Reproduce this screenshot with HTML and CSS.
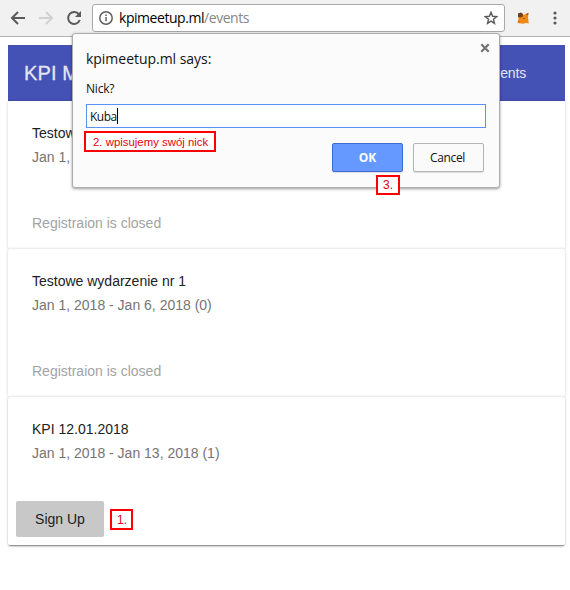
FILE: index.html
```html
<!DOCTYPE html>
<html lang="pl">
<head>
<meta charset="utf-8">
<title>KPI Meetup</title>
<link rel="stylesheet" href="styles.css">
</head>
<body>
<header class="toolbar">
  <svg class="nav back" viewBox="0 0 16 16"><path d="M15 8H2M8 2L2 8l6 6"/></svg>
  <svg class="nav forward" viewBox="0 0 16 16"><path d="M1 8h13M8 2l6 6-6 6"/></svg>
  <svg class="nav reload" viewBox="0 0 16 16"><path d="M13 4.4A6 6 0 1 0 13.8 10"/><path class="solid" d="M15 1v6H9z"/></svg>
  <div class="address">
    <svg class="info" viewBox="0 0 14 14"><circle cx="7" cy="7" r="6.2"/><path d="M7 6v4.3M7 3.4v1.5"/></svg>
    <span class="url">kpimeetup.ml<span class="path">/events</span></span>
    <svg class="star" viewBox="0 0 14 14"><path d="M7 1.3l1.6 4 4.1.3-3.2 2.7 1 4.1L7 10.2l-3.5 2.2 1-4.1-3.2-2.7 4.1-.3z"/></svg>
  </div>
  <svg class="fox" viewBox="0 0 12 12"><path fill="#ee8b16" d="M1 1l3 0 2.5 2L11.5.7l-.5 4.8.8 6L9 11l-3 .8-5.5-.8L1.5 7z"/><path fill="#71401f" d="M1 1.5l3-1L6 2 5.5 5 3 5.5 1 5z"/><path fill="#a9561a" d="M9 2.2L11.4.8 11 3.5zM6 6h2v1H6z"/><path fill="#d06d0c" d="M1.5 8l2 1.5L.8 11z"/></svg>
  <svg class="more" viewBox="0 0 4 14"><circle cx="2" cy="2" r="1.6"/><circle cx="2" cy="7" r="1.6"/><circle cx="2" cy="12" r="1.6"/></svg>
</header>
<main class="page">
  <nav class="appbar"><h1>KPI Meetup</h1><a>Events</a></nav>
  <section class="card">
    <h2>Testowe wydarzenie</h2>
    <p class="date">Jan 1, 2018 - Jan 6, 2018 (0)</p>
    <p class="closed">Registraion is closed</p>
  </section>
  <section class="card">
    <h2>Testowe wydarzenie nr 1</h2>
    <p class="date">Jan 1, 2018 - Jan 6, 2018 (0)</p>
    <p class="closed">Registraion is closed</p>
  </section>
  <section class="card">
    <h2>KPI 12.01.2018</h2>
    <p class="date">Jan 1, 2018 - Jan 13, 2018 (1)</p>
    <div class="actions"><button class="signup">Sign Up</button><span class="note note-signup">1.</span></div>
  </section>
</main>
<div class="dialog" role="dialog">
  <svg class="close" viewBox="0 0 10 10"><path d="M1.3 1.3l7.4 7.4M8.7 1.3L1.3 8.7"/></svg>
  <div class="title"><span>kpimeetup.ml says:</span></div>
  <div class="label"><span>Nick?</span></div>
  <div class="field"><span>Kuba</span><i class="caret"></i></div>
  <div class="buttons"><button class="ok">OK</button><button class="cancel"><span>Cancel</span></button></div>
  <span class="note note-nick">2. wpisujemy swój nick</span>
  <span class="note note-ok">3.</span>
</div>
</body>
</html>
```

FILE: styles.css
```css
* { box-sizing: border-box; }
body {
  margin: 0;
  width: 570px;
  height: 590px;
  overflow: hidden;
  background: #fff;
  font: 14px "Liberation Sans", sans-serif;
}
svg { display: block; flex: none; fill: none; }
h1, h2, p { margin: 0; font-weight: 400; }
button { padding: 0; font: inherit; }

.toolbar {
  display: flex;
  align-items: center;
  height: 37px;
  padding-left: 10px;
  background: #f1f1f1;
  border-bottom: 1px solid #b3b3b3;
}
.nav { width: 16px; height: 16px; stroke: #5a5a5a; stroke-width: 2; }
.forward { margin-left: 12px; stroke: #d0d0d0; }
.reload { margin-left: 12px; }
.solid { fill: #5a5a5a; stroke: none; }
.address {
  display: flex;
  align-items: center;
  width: 413px;
  height: 28px;
  margin-left: 10px;
  padding: 0 6px;
  background: #fff;
  border: 1px solid #a8a8a8;
  border-radius: 3px;
}
.info { width: 14px; height: 14px; stroke: #606060; stroke-width: 1.5; }
.url {
  flex: 1;
  margin-left: 6px;
  font: 14px/20px "Open Sans", sans-serif;
  letter-spacing: -.45px;
  color: #000;
}
.path { color: #858585; }
.star { width: 14px; height: 14px; stroke: #5a5a5a; stroke-width: 1.4; }
.fox { width: 12px; height: 12px; margin-left: 12px; }
.more { width: 4px; height: 14px; margin-left: 24px; fill: #5a5a5a; }

.page { padding: 8px 5px 0 8px; }
.appbar {
  display: flex;
  align-items: center;
  justify-content: space-between;
  height: 56px;
  padding: 0 39px 0 16px;
  background: #4451b5;
  color: #e3e5f4;
}
.appbar h1 { font-size: 20px; letter-spacing: .1px; -webkit-text-stroke: .3px #e3e5f4; }
.appbar a { letter-spacing: -.15px; }
.card {
  display: flex;
  flex-direction: column;
  height: 148px;
  padding: 20px 24px 0;
  background: #fff;
  border-radius: 2px;
}
.card:not(:last-child) { box-shadow: 0 0 3px rgba(0,0,0,.2); }
.card:last-child { box-shadow: 0 0 3px rgba(0,0,0,.2), 0 2px 2px -1px rgba(0,0,0,.5); }
.card h2, .date, .closed { font-size: 14px; line-height: 24px; }
.card h2 { color: #212121; }
.date { color: #757575; }
.closed { margin-top: 42px; color: #a3a3a3; }
.actions { display: flex; align-items: center; gap: 6px; margin: 36px 0 0 -16px; }
.signup {
  width: 88px;
  height: 36px;
  border: 0;
  border-radius: 2px;
  background: #c8c8c8;
  color: #212121;
}
.note {
  height: 21px;
  padding: 0 5px;
  border: 2px solid #f00;
  background: #fff;
  color: #e8000d;
  font-size: 12px;
  line-height: 18px;
  white-space: nowrap;
}
.note-signup { width: 23px; }

.dialog {
  position: absolute;
  left: 72px;
  top: 33px;
  width: 428px;
  height: 155px;
  padding: 15px 13px 0;
  background: #fbfbfb;
  border: 1px solid #adadad;
  border-radius: 3px;
  box-shadow: 0 1px 3px rgba(0,0,0,.4);
  font-family: "Open Sans", sans-serif;
  color: #111;
}
.close {
  position: absolute;
  top: 9px;
  right: 9px;
  width: 10px;
  height: 10px;
  stroke: #737373;
  stroke-width: 2.3;
}
.title { height: 20px; font-size: 14px; line-height: 20px; letter-spacing: -.03px; }
.label { height: 18px; margin-top: 11px; font-size: 12px; line-height: 18px; letter-spacing: -.2px; }
.field {
  display: flex;
  align-items: center;
  height: 24px;
  margin-top: 6px;
  width: 400px;
  padding-left: 3px;
  border: 1px solid #5b92f5;
  background: #fff;
  font-size: 12px;
  letter-spacing: -.5px;
}
.caret { width: 1px; height: 16px; background: #000; }
.buttons { display: flex; justify-content: flex-end; gap: 10px; margin: 15px 2px 0 0; }
.buttons button {
  width: 71px;
  height: 29px;
  border-radius: 2px;
  font-size: 12px;
  box-shadow: 0 1px 1px rgba(0,0,0,.12);
}
.buttons .ok { border: 1px solid #3d6bd0; background: #6699ff; color: #fff; font-weight: 700; }
.buttons .cancel { border: 1px solid #b5b5b5; background: #fafafa; color: #111; letter-spacing: -.35px; padding-right: 2px; }
.dialog .note { position: absolute; font-family: "Liberation Sans", sans-serif; }
.dialog .note-nick { left: 11px; top: 97px; width: 132px; padding: 0 7px; font-size: 11.4px; }
.dialog .note-ok { left: 303px; top: 141px; width: 24px; height: 20px; line-height: 17px; }
```
